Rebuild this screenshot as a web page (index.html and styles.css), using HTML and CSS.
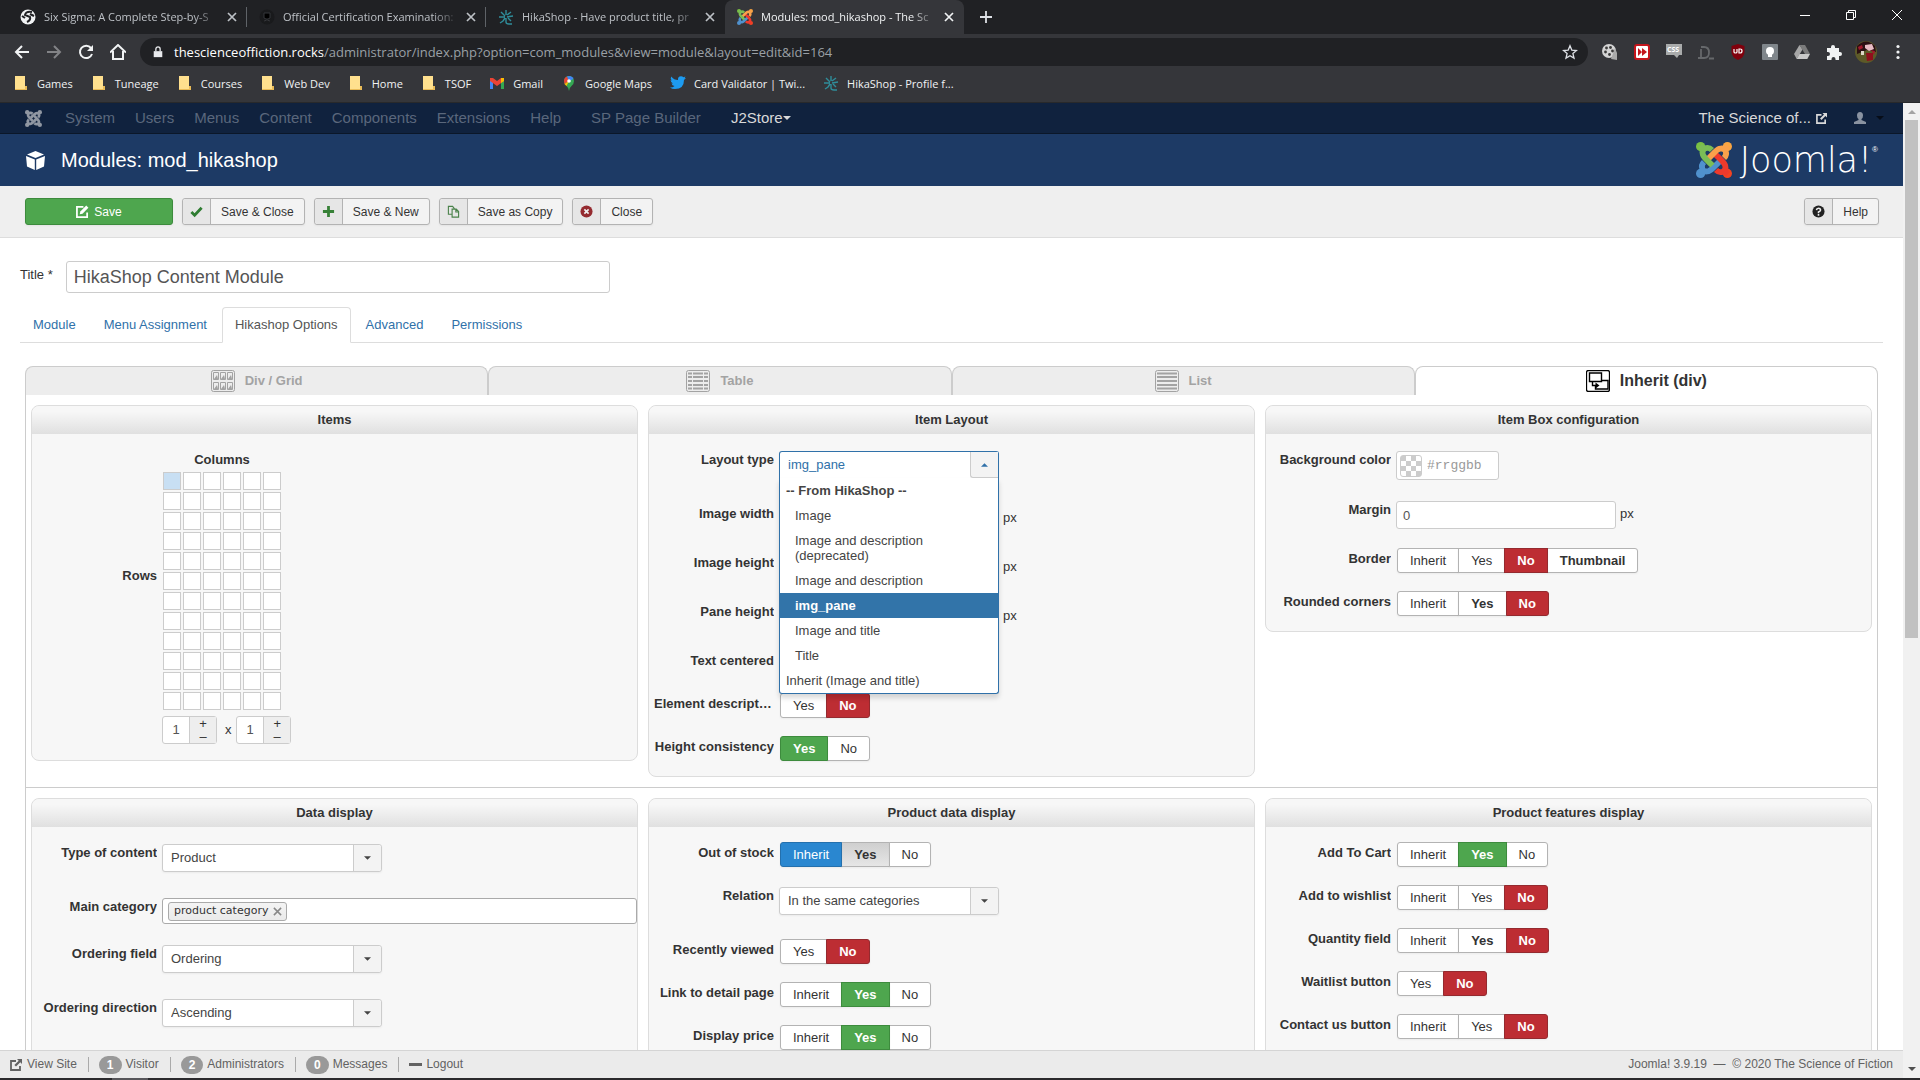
FILE: index.html
```html
<!DOCTYPE html>
<html lang="en">
    <head>
        <meta charset="UTF-8" />
        <meta name="viewport" content="width=device-width, initial-scale=1.0" />
        <title>Modules: mod_hikashop - The Science of Fiction</title>
        <link rel="stylesheet" href="styles.css">
    </head>
    <body>
        <svg class="sprite">
            <symbol id="close" viewBox="0 0 10 10"><path d="M1 1l8 8M9 1l-8 8" fill="none" stroke="currentColor" stroke-width="1.7"/></symbol>
            <symbol id="folder" viewBox="0 0 16 16"><path d="M2 1h10v10h2v4H2z" fill="#ffe08e"/><path d="M2 14h10v1H2zM12 11h2v4h-2z" fill="#e9bb57"/></symbol>
            <symbol id="hika" viewBox="0 0 16 16"><path d="M8 1v5M3 3l4 4M13 3L9 6M1 8h6M9 8l6-1M7 9l-2 3-3 2M8 9v4q0 2 3 2h3M10 9l3 3" fill="none" stroke="#2f8d9a" stroke-width="1.4"/></symbol>
            <symbol id="joomla-arm" viewBox="0 0 36 36"><circle cx="4.6" cy="4.6" r="4.6"/><path d="M4 4l5 4M16 8C12 4 5 6 6.800 12.500C8 16 11 18 16.500 23.500" fill="none" stroke="currentColor" stroke-width="5.800"/></symbol>
            <symbol id="joomla" viewBox="0 0 36 36">
                <g fill="#5091cd" color="#5091cd"><use href="#joomla-arm" width="36" height="36" transform="rotate(270 18 18)"/></g>
                <g fill="#f44321" color="#ee3a2c"><use href="#joomla-arm" width="36" height="36" transform="rotate(180 18 18)"/></g>
                <g fill="#f9a541" color="#f9a14b"><use href="#joomla-arm" width="36" height="36" transform="rotate(90 18 18)"/></g>
                <g fill="#7ac143" color="#7bbd56"><use href="#joomla-arm" width="36" height="36"/></g>
            </symbol>
            <symbol id="joomla-mono" viewBox="0 0 36 36">
                <g fill="currentColor"><use href="#joomla-arm" width="36" height="36"/><use href="#joomla-arm" width="36" height="36" transform="rotate(90 18 18)"/><use href="#joomla-arm" width="36" height="36" transform="rotate(180 18 18)"/><use href="#joomla-arm" width="36" height="36" transform="rotate(270 18 18)"/></g>
            </symbol>
            <symbol id="external" viewBox="0 0 12 12"><path d="M6 2H1v9h9V7" fill="none" stroke="currentColor" stroke-width="1.8"/><path d="M7 0h5v5l-1.700-1.700-4.300 4.300-1.600-1.600L8.700 1.700z" fill="currentColor"/></symbol>
            <symbol id="caret" viewBox="0 0 8 4"><path d="M0 0h8L4 4z" fill="currentColor"/></symbol>
            <symbol id="edit" viewBox="0 0 14 14"><path d="M8 2H1v11h11V8" fill="none" stroke="currentColor" stroke-width="1.900"/><path d="M4 10l.7-3L11 .6 13.400 3 7 9.300z" fill="currentColor"/></symbol>
        </svg>

        <div class="browser">
            <div class="tab-strip">
                <div class="tab">
                    <svg class="favicon" viewBox="0 0 16 16"><circle cx="8" cy="8" r="7.500" fill="#f1f3f4"/><path d="M12 3Q6 2 5 6l5 2q1 3-3 5M2 7l3 2M10 5l4 2" fill="none" stroke="#202124" stroke-width="2"/></svg>
                    <span class="tab-title">Six Sigma: A Complete Step-by-S</span>
                    <button class="tab-close" aria-label="Close tab"><svg><use href="#close"/></svg></button>
                </div>
                <div class="tab">
                    <svg class="favicon" viewBox="0 0 16 16"><circle cx="8" cy="8" r="7.500" fill="#191a1c"/><path d="M5 4h6v5l-2 1H7L5 9zM5 12l3-1 3 1" fill="#000" stroke="#35363a"/></svg>
                    <span class="tab-title">Official Certification Examination:</span>
                    <button class="tab-close" aria-label="Close tab"><svg><use href="#close"/></svg></button>
                </div>
                <div class="tab no-line">
                    <svg class="favicon"><use href="#hika"/></svg>
                    <span class="tab-title">HikaShop - Have product title, pr</span>
                    <button class="tab-close" aria-label="Close tab"><svg><use href="#close"/></svg></button>
                </div>
                <div class="tab active">
                    <svg class="favicon"><use href="#joomla"/></svg>
                    <span class="tab-title">Modules: mod_hikashop - The Sc</span>
                    <button class="tab-close" aria-label="Close tab"><svg><use href="#close"/></svg></button>
                </div>
                <button class="new-tab" aria-label="New tab"><svg viewBox="0 0 12 12"><path d="M6 0v12M0 6h12" stroke="#dee1e6" stroke-width="1.800"/></svg></button>
                <div class="window-controls">
                    <button aria-label="Minimize"><svg viewBox="0 0 10 10"><path d="M0 5.500h10" stroke="#fff"/></svg></button>
                    <button aria-label="Restore"><svg viewBox="0 0 10 10"><path d="M.5 2.500h7v7h-7zM2.500 2.500v-2h7v7h-2" fill="none" stroke="#fff"/></svg></button>
                    <button aria-label="Close"><svg viewBox="0 0 10 10"><path d="M0 0l10 10M10 0L0 10" stroke="#fff"/></svg></button>
                </div>
            </div>

            <div class="toolbar">
                <button aria-label="Back"><svg viewBox="0 0 16 16"><path d="M15 8H2M8 2L2 8l6 6" fill="none" stroke="#f1f3f4" stroke-width="2"/></svg></button>
                <button aria-label="Forward"><svg viewBox="0 0 16 16"><path d="M1 8h13M8 2l6 6-6 6" fill="none" stroke="#828386" stroke-width="2"/></svg></button>
                <button aria-label="Reload"><svg viewBox="0 0 16 16"><path d="M13 4A6.200 6.200 0 1 0 14 10" fill="none" stroke="#f1f3f4" stroke-width="2"/><path d="M15 1v6H9z" fill="#f1f3f4"/></svg></button>
                <button aria-label="Home"><svg viewBox="0 0 16 16"><path d="M0 8.500L8 1l8 7.500M3 7v8h10V7" fill="none" stroke="#f1f3f4" stroke-width="2"/></svg></button>
                <div class="omnibox">
                    <svg class="lock" viewBox="0 0 12 14"><path d="M1 6h10v7H1z" fill="#e8eaed"/><path d="M3.500 6V3.500a2.500 2.500 0 0 1 5 0V6" fill="none" stroke="#e8eaed" stroke-width="1.500"/></svg>
                    <span class="url"><b>thescienceoffiction.rocks</b>/administrator/index.php?option=com_modules&amp;view=module&amp;layout=edit&amp;id=164</span>
                    <svg class="star" viewBox="0 0 16 16"><path d="M8 1.800l1.800 4.300 4.700.4-3.600 3 1.100 4.600L8 11.700l-4 2.400 1.100-4.600-3.600-3 4.700-.4z" fill="none" stroke="#dee1e6" stroke-width="1.300"/></svg>
                </div>
                <button aria-label="Film extension"><svg viewBox="0 0 16 16"><circle cx="7" cy="7" r="7" fill="#d4d4d4"/><path d="M9 15l6 1V9l-2-5z" fill="#aaa"/><g fill="#3a3a3a"><circle cx="4.500" cy="4" r="1.400"/><circle cx="8.500" cy="3.500" r="1.400"/><circle cx="10.500" cy="7" r="1.400"/><circle cx="7.500" cy="10.500" r="1.400"/><circle cx="3.500" cy="8" r="1.400"/></g></svg></button>
                <button aria-label="Video extension"><svg viewBox="0 0 16 16"><rect x="1" y="1" width="14" height="14" rx="2" fill="#fff" stroke="#c4151c" stroke-width="2"/><path d="M4 4l4 4-4 4zM8 4l5 4-5 4z" fill="#c4151c"/></svg></button>
                <button aria-label="CSS extension"><svg viewBox="0 0 16 16"><path d="M0 0h16v11h-3l-2 3-3-3H0z" fill="#a9abab"/><text class="css-text" x="1" y="8">CSS</text></svg></button>
                <button aria-label="D extension"><svg viewBox="0 0 16 16"><path d="M3 3h3q5 0 5 5.500T6 14H0M3 5v9M11 14.500h5" fill="none" stroke="#66686b" stroke-width="1.800"/></svg></button>
                <button aria-label="uBlock"><svg viewBox="0 0 16 16"><path d="M8 0l6.500 2v6q0 5-6.500 8Q1.500 13 1.500 8V2z" fill="#80000c"/><path d="M4 5v3q0 1 1.500 1T7 8V5M9 5v4h1q2 0 2-2t-2-2z" fill="none" stroke="#fff" stroke-width="1.200"/></svg></button>
                <button aria-label="Lamp extension"><svg viewBox="0 0 16 16"><rect width="16" height="16" rx="1" fill="#80868b"/><circle cx="8" cy="7" r="4" fill="#fff"/><path d="M6 10h4v3H6z" fill="#fff"/></svg></button>
                <button aria-label="Drive"><svg viewBox="0 0 16 16"><path d="M5.500 1L0 10l2.700 5L8.500 5.500z" fill="#a6a6a6"/><path d="M5.500 1H11l5 9h-5z" fill="#7b7b7b"/><path d="M5.500 10H16l-2.700 5H2.700z" fill="#c9c9c9"/></svg></button>
                <button aria-label="Extensions"><svg viewBox="0 0 16 16"><path d="M1 4h4V3a2 2 0 0 1 4 0v1h4v4h1a2 2 0 0 1 0 4h-1v4H9.500v-1a2 2 0 0 0-4 0v1H1v-4h1a2 2 0 0 0 0-4H1z" fill="#f1f3f4"/></svg></button>
                <button aria-label="Profile"><svg class="avatar" viewBox="0 0 22 22"><circle cx="11" cy="11" r="11" fill="#5d5a28"/><path d="M2 5q9-9 18 0l1 6-9-2-10 4z" fill="#2b1013"/><path d="M10 4l7-1 2 5-5 2-4-3z" fill="#e8bcc4"/><path d="M3 6l4-2 1 3-4 2zM16 9l4 1-1 4z" fill="#a1182b"/><path d="M11 12h7v7l-6 1z" fill="#8f0f1c"/><path d="M6 10h3v4H6z" fill="#dfd8c8"/></svg></button>
                <button aria-label="Menu"><svg viewBox="0 0 16 16"><g fill="#f1f3f4"><circle cx="8" cy="2.500" r="1.600"/><circle cx="8" cy="8" r="1.600"/><circle cx="8" cy="13.500" r="1.600"/></g></svg></button>
            </div>

            <nav class="bookmarks">
                <a href="#"><svg><use href="#folder"/></svg>Games</a>
                <a href="#"><svg><use href="#folder"/></svg>Tuneage</a>
                <a href="#"><svg><use href="#folder"/></svg>Courses</a>
                <a href="#"><svg><use href="#folder"/></svg>Web Dev</a>
                <a href="#"><svg><use href="#folder"/></svg>Home</a>
                <a href="#"><svg><use href="#folder"/></svg>TSOF</a>
                <a href="#"><svg viewBox="0 0 16 16"><path d="M1 3h3v11H1z" fill="#4285f4"/><path d="M12 3h3v11h-3z" fill="#34a853"/><path d="M1 3h3l4 3 4-3h3v3l-7 5-7-5z" fill="#ea4335"/><path d="M12 3h3v3l-3 2z" fill="#fbbc04"/></svg>Gmail</a>
                <a href="#"><svg viewBox="0 0 16 16"><path d="M3 6a5 5 0 0 1 10 0q0 3-2.500 5T8 16q0-3-2.500-5T3 6z" fill="#34a853"/><path d="M3 6a5 5 0 0 1 3-4.600L8 6l-4.500 3z" fill="#ea4335"/><path d="M6 1.400A5 5 0 0 1 12.500 4L8 6z" fill="#4285f4"/><path d="M3.500 9L8 6l-2.500 5z" fill="#fbbc04"/><circle cx="8" cy="6" r="1.800" fill="#fff"/></svg>Google Maps</a>
                <a href="#"><svg viewBox="0 0 16 16"><path d="M16 3l-2 2q0 9-9 9-3 0-5-1.500 3 0 4.500-1.500Q2 10.500 1.500 8.500H3Q.6 7.500.6 5L2 5.500Q0 3.500 1.200 1.500 4 5 8 5 7.600 1.500 11 1.200q1.500 0 2.500 1l2-.7-1 1.700z" fill="#1d9bf0"/></svg>Card Validator | Twi...</a>
                <a href="#"><svg><use href="#hika"/></svg>HikaShop - Profile f...</a>
            </nav>
        </div>

        <div class="viewport">
            <div class="page">
                <nav class="navbar">
                    <a href="#" class="brand" aria-label="Control panel"><svg><use href="#joomla-mono"/></svg></a>
                    <a href="#">System</a>
                    <a href="#">Users</a>
                    <a href="#">Menus</a>
                    <a href="#">Content</a>
                    <a href="#">Components</a>
                    <a href="#">Extensions</a>
                    <a href="#">Help</a>
                    <a href="#" class="extra">SP Page Builder</a>
                    <a href="#" class="extra lit">J2Store<svg class="caret"><use href="#caret"/></svg></a>
                    <a href="#" class="site-link lit">The Science of... <svg class="ext"><use href="#external"/></svg></a>
                    <a href="#" class="user" aria-label="User menu">
                        <svg class="person" viewBox="0 0 12 12"><path d="M6 0q3 0 3 3.500Q9 6 7.500 7v1L12 10v2H0v-2l4.500-2V7Q3 6 3 3.500 3 0 6 0z" fill="currentColor"/></svg>
                        <svg class="caret dark"><use href="#caret"/></svg>
                    </a>
                </nav>

                <header class="header">
                    <svg class="cube" viewBox="0 0 19 19"><path d="M9.500 0L18 3.500 9.500 7 1 3.500zM0 5l8.800 3.500V19L1 15.500zM19 5l-8.800 3.500V19L18 15.500z" fill="#fff"/></svg>
                    <h1>Modules: mod_hikashop</h1>
                    <a href="#" class="logo"><svg><use href="#joomla"/></svg><span>Joomla!</span><sup>®</sup></a>
                </header>

                <div class="subhead">
                    <button class="tool save"><svg><use href="#edit"/></svg>Save</button>
                    <button class="tool"><span class="tool-icon"><svg viewBox="0 0 14 14"><path d="M1.500 7.500L5 11l7.500-8" fill="none" stroke="#2f7d32" stroke-width="3"/></svg></span><span class="tool-text">Save &amp; Close</span></button>
                    <button class="tool"><span class="tool-icon"><svg viewBox="0 0 14 14"><path d="M7 1v12M1 7h12" stroke="#378137" stroke-width="3"/></svg></span><span class="tool-text">Save &amp; New</span></button>
                    <button class="tool"><span class="tool-icon"><svg viewBox="0 0 14 14"><path d="M5 10H1.500V1.500H6L8 4M5.500 4.500H10L12.500 7v6h-7zM9.500 5v2.500H12" fill="none" stroke="#4a824a" stroke-width="1.200"/></svg></span><span class="tool-text">Save as Copy</span></button>
                    <button class="tool"><span class="tool-icon"><svg viewBox="0 0 14 14"><circle cx="7" cy="7" r="6.500" fill="#942a2f"/><path d="M4.700 4.700l4.600 4.600M9.300 4.700L4.700 9.300" stroke="#eee" stroke-width="1.800"/></svg></span><span class="tool-text">Close</span></button>
                    <button class="tool help"><span class="tool-icon"><svg viewBox="0 0 14 14"><circle cx="7" cy="7" r="6.500" fill="#222"/><path d="M4.800 5.500Q5 3.500 7 3.500t2.200 1.800Q9.200 6.500 7 7.500V8.500M7 9.500v2" fill="none" stroke="#eee" stroke-width="1.700"/></svg></span><span class="tool-text">Help</span></button>
                </div>

                <main class="content">
                    <div class="title-row">
                        <label for="title">Title *</label>
                        <input type="text" id="title" value="HikaShop Content Module">
                    </div>

                    <nav class="nav-tabs">
                        <a href="#">Module</a>
                        <a href="#">Menu Assignment</a>
                        <a href="#" class="active">Hikashop Options</a>
                        <a href="#">Advanced</a>
                        <a href="#">Permissions</a>
                    </nav>

                    <div class="layouts">
                        <button class="layout"><svg viewBox="0 0 24 22"><rect x=".5" y=".5" width="23" height="21" rx="2" fill="none" stroke="currentColor"/><g fill="none" stroke="currentColor"><path d="M2.500 2.500h5v7h-5zM9.500 2.500h5v7h-5zM16.500 2.500h5v7h-5zM2.500 12.500h5v7h-5zM9.500 12.500h5v7h-5zM16.500 12.500h5v7h-5z"/></g><path d="M3 9l3-4 1 4zM10 9l3-4 1 4zM17 9l3-4 1 4zM3 19l3-4 1 4zM10 19l3-4 1 4zM17 19l3-4 1 4z" fill="currentColor"/></svg>Div / Grid</button>
                        <button class="layout"><svg viewBox="0 0 24 22"><rect x=".5" y=".5" width="23" height="21" rx="2" fill="none" stroke="currentColor"/><path d="M2 3.500h20M2 7h20M2 11h20M2 15h20M2 18.500h20" stroke="currentColor" stroke-width="2"/><path d="M6.500 1v20M17.500 1v20" stroke="#ededed"/></svg>Table</button>
                        <button class="layout"><svg viewBox="0 0 24 22"><rect x=".5" y=".5" width="23" height="21" rx="2" fill="none" stroke="currentColor"/><path d="M2 3.500h20M2 7h20M2 11h20M2 15h20M2 18.500h20" stroke="currentColor" stroke-width="2"/></svg>List</button>
                        <button class="layout active"><svg viewBox="0 0 24 22"><rect x=".5" y=".5" width="23" height="21" rx="2" fill="none" stroke="#000" stroke-width="1.300"/><path d="M3.500 3h12v8.500h-12zM16 10.500h6v8.500H9.500v-3M6.500 12v3.500h4" fill="none" stroke="#000" stroke-width="1.400"/><path d="M9.500 12.500l4 3-4 3z" fill="#000"/></svg>Inherit (div)</button>
                    </div>

                    <div class="options">
                        <section class="panels">
                            <div class="panel">
                                <h2>Items</h2>
                                <div class="panel-body">
                                    <div class="picker">
                                        <span class="picker-rows">Rows</span>
                                        <span class="picker-columns">Columns</span>
                                        <div class="cells" id="cells"></div>
                                    </div>
                                    <div class="counters">
                                        <div class="counter">
                                            <input type="text" value="1" aria-label="Columns">
                                            <div class="steps"><button>+</button><button>–</button></div>
                                        </div>
                                        <span>x</span>
                                        <div class="counter">
                                            <input type="text" value="1" aria-label="Rows">
                                            <div class="steps"><button>+</button><button>–</button></div>
                                        </div>
                                    </div>
                                </div>
                            </div>

                            <div class="panel">
                                <h2>Item Layout</h2>
                                <div class="panel-body">
                                    <div class="row row-select">
                                        <label for="layout-type">Layout type</label>
                                        <div class="chosen open">
                                            <select id="layout-type"><option>img_pane</option></select>
                                            <span class="arrow"><svg><use href="#caret"/></svg></span>
                                            <ul class="menu">
                                                <li class="group">-- From HikaShop --</li>
                                                <li class="sub">Image</li>
                                                <li class="sub">Image and description (deprecated)</li>
                                                <li class="sub">Image and description</li>
                                                <li class="sub selected">img_pane</li>
                                                <li class="sub">Image and title</li>
                                                <li class="sub">Title</li>
                                                <li>Inherit (Image and title)</li>
                                            </ul>
                                        </div>
                                    </div>
                                    <div class="row row-input">
                                        <label for="image-width">Image width</label>
                                        <div class="field"><input type="text" id="image-width"> px</div>
                                    </div>
                                    <div class="row row-input">
                                        <label for="image-height">Image height</label>
                                        <div class="field"><input type="text" id="image-height"> px</div>
                                    </div>
                                    <div class="row row-input">
                                        <label for="pane-height">Pane height</label>
                                        <div class="field"><input type="text" id="pane-height"> px</div>
                                    </div>
                                    <div class="row">
                                        <label for="centered">Text centered</label>
                                        <input type="checkbox" class="check" id="centered">
                                    </div>
                                    <div class="row">
                                        <span class="label">Element description</span>
                                        <div class="btn-group">
                                            <label><input type="radio" name="desc">Yes</label>
                                            <label class="no"><input type="radio" name="desc" checked>No</label>
                                        </div>
                                    </div>
                                    <div class="row">
                                        <span class="label">Height consistency</span>
                                        <div class="btn-group">
                                            <label class="yes"><input type="radio" name="consistency" checked>Yes</label>
                                            <label><input type="radio" name="consistency">No</label>
                                        </div>
                                    </div>
                                </div>
                            </div>

                            <div class="panel">
                                <h2>Item Box configuration</h2>
                                <div class="panel-body">
                                    <div class="row row-color">
                                        <label for="bg-color">Background color</label>
                                        <div class="color-field"><span class="swatch"></span><input type="text" id="bg-color" placeholder="#rrggbb"></div>
                                    </div>
                                    <div class="row row-input">
                                        <label for="margin">Margin</label>
                                        <div class="field"><input type="text" id="margin" value="0"> px</div>
                                    </div>
                                    <div class="row">
                                        <span class="label">Border</span>
                                        <div class="btn-group">
                                            <label><input type="radio" name="border">Inherit</label>
                                            <label><input type="radio" name="border">Yes</label>
                                            <label class="no"><input type="radio" name="border" checked>No</label>
                                            <label class="strong"><input type="radio" name="border">Thumbnail</label>
                                        </div>
                                    </div>
                                    <div class="row">
                                        <span class="label">Rounded corners</span>
                                        <div class="btn-group">
                                            <label><input type="radio" name="corners">Inherit</label>
                                            <label class="strong"><input type="radio" name="corners">Yes</label>
                                            <label class="no"><input type="radio" name="corners" checked>No</label>
                                        </div>
                                    </div>
                                </div>
                            </div>
                        </section>

                        <section class="panels">
                            <div class="panel">
                                <h2>Data display</h2>
                                <div class="panel-body">
                                    <div class="row row-select">
                                        <label for="content-type">Type of content</label>
                                        <div class="chosen">
                                            <select id="content-type"><option>Product</option></select>
                                            <span class="arrow"><svg><use href="#caret"/></svg></span>
                                        </div>
                                    </div>
                                    <div class="row row-tags">
                                        <span class="label">Main category</span>
                                        <div class="tags"><span class="tag">product category<button aria-label="Remove"><svg><use href="#close"/></svg></button></span></div>
                                    </div>
                                    <div class="row row-select">
                                        <label for="order-field">Ordering field</label>
                                        <div class="chosen">
                                            <select id="order-field"><option>Ordering</option></select>
                                            <span class="arrow"><svg><use href="#caret"/></svg></span>
                                        </div>
                                    </div>
                                    <div class="row row-select">
                                        <label for="order-dir">Ordering direction</label>
                                        <div class="chosen">
                                            <select id="order-dir"><option>Ascending</option></select>
                                            <span class="arrow"><svg><use href="#caret"/></svg></span>
                                        </div>
                                    </div>
                                </div>
                            </div>

                            <div class="panel">
                                <h2>Product data display</h2>
                                <div class="panel-body">
                                    <div class="row">
                                        <span class="label">Out of stock</span>
                                        <div class="btn-group">
                                            <label class="inherit"><input type="radio" name="stock" checked>Inherit</label>
                                            <label class="strong pressed"><input type="radio" name="stock">Yes</label>
                                            <label><input type="radio" name="stock">No</label>
                                        </div>
                                    </div>
                                    <div class="row row-select">
                                        <label for="relation">Relation</label>
                                        <div class="chosen">
                                            <select id="relation"><option>In the same categories</option></select>
                                            <span class="arrow"><svg><use href="#caret"/></svg></span>
                                        </div>
                                    </div>
                                    <div class="row">
                                        <span class="label">Recently viewed</span>
                                        <div class="btn-group">
                                            <label><input type="radio" name="recent">Yes</label>
                                            <label class="no"><input type="radio" name="recent" checked>No</label>
                                        </div>
                                    </div>
                                    <div class="row">
                                        <span class="label">Link to detail page</span>
                                        <div class="btn-group">
                                            <label><input type="radio" name="link">Inherit</label>
                                            <label class="yes"><input type="radio" name="link" checked>Yes</label>
                                            <label><input type="radio" name="link">No</label>
                                        </div>
                                    </div>
                                    <div class="row">
                                        <span class="label">Display price</span>
                                        <div class="btn-group">
                                            <label><input type="radio" name="price">Inherit</label>
                                            <label class="yes"><input type="radio" name="price" checked>Yes</label>
                                            <label><input type="radio" name="price">No</label>
                                        </div>
                                    </div>
                                </div>
                            </div>

                            <div class="panel">
                                <h2>Product features display</h2>
                                <div class="panel-body">
                                    <div class="row">
                                        <span class="label">Add To Cart</span>
                                        <div class="btn-group">
                                            <label><input type="radio" name="cart">Inherit</label>
                                            <label class="yes"><input type="radio" name="cart" checked>Yes</label>
                                            <label><input type="radio" name="cart">No</label>
                                        </div>
                                    </div>
                                    <div class="row">
                                        <span class="label">Add to wishlist</span>
                                        <div class="btn-group">
                                            <label><input type="radio" name="wishlist">Inherit</label>
                                            <label><input type="radio" name="wishlist">Yes</label>
                                            <label class="no"><input type="radio" name="wishlist" checked>No</label>
                                        </div>
                                    </div>
                                    <div class="row">
                                        <span class="label">Quantity field</span>
                                        <div class="btn-group">
                                            <label><input type="radio" name="quantity">Inherit</label>
                                            <label class="strong"><input type="radio" name="quantity">Yes</label>
                                            <label class="no"><input type="radio" name="quantity" checked>No</label>
                                        </div>
                                    </div>
                                    <div class="row">
                                        <span class="label">Waitlist button</span>
                                        <div class="btn-group">
                                            <label><input type="radio" name="waitlist">Yes</label>
                                            <label class="no"><input type="radio" name="waitlist" checked>No</label>
                                        </div>
                                    </div>
                                    <div class="row">
                                        <span class="label">Contact us button</span>
                                        <div class="btn-group">
                                            <label><input type="radio" name="contact">Inherit</label>
                                            <label><input type="radio" name="contact">Yes</label>
                                            <label class="no"><input type="radio" name="contact" checked>No</label>
                                        </div>
                                    </div>
                                </div>
                            </div>
                        </section>
                    </div>
                </main>

                <footer class="status">
                    <a href="#"><svg><use href="#external"/></svg>View Site</a>
                    <span class="item"><span class="badge">1</span>Visitor</span>
                    <span class="item"><span class="badge">2</span>Administrators</span>
                    <a href="#" class="item"><span class="badge">0</span>Messages</a>
                    <a href="#" class="item"><span class="dash"></span>Logout</a>
                    <span class="copyright">Joomla! 3.9.19 &nbsp;—&nbsp; © 2020 The Science of Fiction</span>
                </footer>
            </div>

            <div class="scrollbar">
                <svg class="up"><use href="#caret"/></svg>
                <div class="track"><div class="thumb"></div></div>
                <svg class="down"><use href="#caret"/></svg>
            </div>
        </div>
        <div class="taskbar"><span></span></div>

        <script>
            // 12 rows of 6 cells, first one picked
            const cells = document.getElementById("cells");
            for (let i = 0; i < 72; i++) {
                const cell = document.createElement("button");
                cell.setAttribute("aria-label", "Cell " + (i + 1));
                if (i === 0) cell.className = "on";
                cells.appendChild(cell);
            }
        </script>
    </body>
</html>
```
FILE: styles.css
```css
* {
    box-sizing: border-box;
}
body {
    margin: 0;
    height: 100vh;
    display: flex;
    flex-direction: column;
    overflow: hidden;
    font-family: "Liberation Sans", Arial, sans-serif;
    font-size: 13px;
    line-height: 18px;
    color: #333;
    background-color: #fff;
}
button,
input,
select {
    font: inherit;
    color: inherit;
    margin: 0;
    padding: 0;
    border: 0;
    background: none;
}
a {
    color: inherit;
    text-decoration: none;
}
svg {
    display: block;
    flex: none;
}
.sprite {
    position: absolute;
    width: 0;
    height: 0;
}

/* browser window */
.browser {
    font-family: "Open Sans", "Noto Sans", sans-serif;
    font-size: 11px;
    color: #f1f3f4;
    background-color: #35363a;
    border-bottom: 1px solid #28292b;
}
.tab-strip {
    display: flex;
    height: 34px;
    padding-left: 8px;
    background-color: #202124;
}
.tab {
    display: flex;
    align-items: center;
    width: 239px;
    padding: 0 6px 0 12px;
    color: #bdc1c6;
    background: linear-gradient(#5f6368, #5f6368) right center / 1px 20px no-repeat;
}
.tab.no-line {
    background: none;
}
.tab.active {
    color: #f1f3f4;
    background: #35363a;
    border-radius: 8px 8px 0 0;
}
.favicon {
    width: 16px;
    height: 16px;
}
.tab-title {
    flex: 1;
    min-width: 0;
    margin: 0 3px 0 8px;
    overflow: hidden;
    white-space: nowrap;
    mask-image: linear-gradient(to right, #000 85%, transparent);
}
.tab-close {
    padding: 4px;
}
.tab-close svg {
    width: 10px;
    height: 10px;
}
.new-tab {
    padding: 0 16px;
}
.new-tab svg {
    width: 12px;
    height: 12px;
}
.window-controls {
    display: flex;
    height: 29px;
    margin-left: auto;
}
.window-controls button {
    width: 46px;
    display: flex;
    align-items: center;
    justify-content: center;
}
.window-controls svg {
    width: 10px;
    height: 10px;
}
.toolbar {
    display: flex;
    align-items: center;
    padding: 4px 6px 0;
}
.toolbar button {
    width: 32px;
    display: flex;
    justify-content: center;
}
.toolbar svg {
    width: 16px;
    height: 16px;
}
.toolbar .avatar {
    width: 22px;
    height: 22px;
}
.css-text {
    font-size: 7px;
    font-weight: bold;
    fill: #fff;
}
.omnibox {
    flex: 1;
    display: flex;
    align-items: center;
    height: 28px;
    margin: 0 6px;
    padding: 0 10px 0 12px;
    border-radius: 14px;
    background-color: #202124;
}
.toolbar .lock {
    width: 12px;
    height: 12px;
}
.url {
    flex: 1;
    margin-left: 10px;
    font-size: 13px;
    color: #9aa0a6;
}
.url b {
    font-weight: normal;
    color: #fff;
}
.bookmarks {
    display: flex;
    gap: 18px;
    align-items: center;
    height: 36px;
    padding-left: 13px;
}
.bookmarks a {
    display: flex;
    gap: 8px;
}
.bookmarks svg {
    width: 16px;
    height: 16px;
}

/* page and its scrollbar */
.viewport {
    flex: 1;
    min-height: 0;
    display: flex;
}
.page {
    flex: 1;
    min-width: 0;
    display: flex;
    flex-direction: column;
}
.scrollbar {
    width: 17px;
    display: flex;
    flex-direction: column;
    align-items: center;
    padding: 7px 0;
    color: #505050;
    background-color: #f1f1f1;
}
.scrollbar svg {
    width: 8px;
    height: 4px;
}
.scrollbar .up {
    color: #a3a3a3;
    transform: rotate(180deg);
}
.track {
    flex: 1;
    margin: 6px 0;
}
.thumb {
    width: 13px;
    height: 55%;
    background-color: #c1c1c1;
}
.taskbar {
    height: 2px;
    padding-left: 112px;
    background-color: #2b2a2d;
}
.taskbar span {
    display: block;
    width: 36px;
    height: 2px;
    background-color: #57565a;
}

/* admin header */
.navbar {
    flex: none;
    display: flex;
    align-items: center;
    height: 31px;
    padding: 0 9px 0 15px;
    font-size: 15px;
    color: #5a677c;
    background-color: #10223e;
    border-bottom: 1px solid #0b1729;
}
.navbar a {
    display: flex;
    align-items: center;
    padding: 0 10px;
}
.brand {
    margin-right: 3px;
    color: #9097a2;
}
.brand svg {
    width: 17px;
    height: 17px;
}
.navbar .extra {
    margin-left: 10px;
}
.navbar .lit {
    color: #d9d9d9;
}
.caret {
    width: 8px;
    height: 4px;
}
.caret.dark {
    color: #070d18;
}
.navbar .site-link {
    gap: 5px;
    margin-left: auto;
}
.ext {
    width: 11px;
    height: 11px;
}
.navbar .user {
    gap: 10px;
    margin-left: 7px;
    color: #8a93a1;
}
.person {
    width: 12px;
    height: 12px;
}
.header {
    flex: none;
    display: flex;
    align-items: center;
    height: 52px;
    padding: 0 25px 0 26px;
    background-color: #1d3a65;
    color: #fff;
}
.cube {
    width: 19px;
    height: 19px;
}
.header h1 {
    margin: 0 0 0 16px;
    font-size: 20px;
    font-weight: normal;
    line-height: 28px;
}
.logo {
    display: flex;
    align-items: center;
    margin-left: auto;
}
.logo svg {
    width: 36px;
    height: 36px;
    margin-right: 8px;
}
.logo span {
    font-family: "DejaVu Sans", sans-serif;
    font-size: 35px;
    font-weight: 200;
    line-height: 36px;
}
.logo sup {
    align-self: flex-start;
    font-size: 8px;
    line-height: 16px;
}

/* toolbar buttons */
.subhead {
    flex: none;
    display: flex;
    gap: 9px;
    padding: 12px 24px 12px 25px;
    background-color: #efefef;
    border-bottom: 1px solid #ddd;
}
.tool {
    display: flex;
    height: 27px;
    font-size: 12px;
    line-height: 26px;
    background-color: #f3f3f3;
    border: 1px solid #b3b3b3;
    border-radius: 3px;
    box-shadow: 0 1px 2px rgba(0, 0, 0, 0.05);
}
.tool svg {
    width: 13px;
    height: 13px;
}
.tool-icon {
    display: flex;
    align-items: center;
    justify-content: center;
    width: 28px;
    height: 25px;
    background-color: #e6e6e6;
    border-right: 1px solid #b3b3b3;
    border-radius: 3px 0 0 3px;
}
.tool-text {
    padding: 0 10px;
}
.tool.save {
    width: 148px;
    gap: 5px;
    align-items: center;
    justify-content: center;
    color: #fff;
    background-color: #4ea64e;
    border-color: #3d8b3d;
}
.tool.help {
    margin-left: auto;
}

/* form */
.content {
    flex: 1;
    min-height: 0;
    overflow: hidden;
    padding: 23px 20px 0;
}
.title-row {
    display: flex;
    gap: 13px;
    line-height: 28px;
}
.title-row input {
    width: 544px;
    height: 32px;
    padding: 0 7px;
    font-size: 18px;
    color: #555;
    border: 1px solid #ccc;
    border-radius: 3px;
}
.nav-tabs {
    display: flex;
    gap: 2px;
    margin: 14px 0 23px;
    border-bottom: 1px solid #ddd;
}
.nav-tabs a {
    padding: 8px 12px;
    margin-bottom: -1px;
    border: 1px solid transparent;
    border-radius: 4px 4px 0 0;
    color: #3071a9;
}
.nav-tabs .active {
    color: #555;
    background-color: #fff;
    border-color: #ddd #ddd #fff;
}
.layouts {
    display: grid;
    grid-template-columns: repeat(4, 1fr);
    margin: 0 5px;
}
.layout {
    display: flex;
    align-items: center;
    justify-content: center;
    gap: 10px;
    height: 29px;
    font-weight: bold;
    color: #a3a3a3;
    background-color: #ededed;
    border: 1px solid #ccc;
    border-bottom: 0;
    border-radius: 8px 8px 0 0;
}
.layout svg {
    width: 24px;
    height: 22px;
}
.layout.active {
    font-size: 16px;
    color: #333;
    background-color: #fff;
}
.options {
    margin: 0 5px;
    border: 1px solid #ccc;
    border-top: 0;
}
.panels {
    display: grid;
    grid-template-columns: repeat(3, 1fr);
    align-items: start;
    gap: 10px;
    padding: 10px 5px;
}
.panels + .panels {
    align-items: stretch;
    border-top: 1px solid #ccc;
}
.panel {
    min-width: 0;
    background-color: #f7f7f7;
    border: 1px solid #ddd;
    border-radius: 8px;
}
.panel h2 {
    margin: 0;
    padding: 5px 0;
    font-size: 13px;
    line-height: 18px;
    text-align: center;
    background: linear-gradient(#f7f7f7 20%, #e0e0e0);
    border-radius: 8px 8px 0 0;
}
.panel-body {
    display: flex;
    flex-direction: column;
    gap: 18px;
    padding: 15px 0;
}
.row {
    display: grid;
    grid-template-columns: 125px 1fr;
    gap: 5px;
    align-items: start;
    min-height: 25px;
}
.row > label,
.row > .label {
    margin-top: 2px;
    padding-left: 5px;
    font-weight: bold;
    text-align: right;
    overflow: hidden;
    text-overflow: ellipsis;
    white-space: nowrap;
}
.row-select {
    min-height: 36px;
}
.row-input {
    min-height: 31px;
}
.row-color {
    min-height: 32px;
}
.row-tags {
    min-height: 29px;
}
.field,
.chosen,
.color-field,
.tags {
    margin-top: 2px;
}
.field {
    display: flex;
    gap: 4px;
    line-height: 26px;
}
.field input {
    width: 220px;
    height: 28px;
    padding: 0 6px;
    color: #555;
    background-color: #fff;
    border: 1px solid #ccc;
    border-radius: 3px;
}
.check {
    justify-self: start;
    margin: 6px 1px;
}
.btn-group {
    display: flex;
    margin-left: 1px;
}
.btn-group label {
    padding: 3px 12px;
    line-height: 17px;
    background-color: #fff;
    border: 1px solid #b3b3b3;
    box-shadow: 0 1px 2px rgba(0, 0, 0, 0.05);
}
.btn-group label + label {
    margin-left: -1px;
}
.btn-group label:first-child {
    border-radius: 3px 0 0 3px;
}
.btn-group label:last-child {
    border-radius: 0 3px 3px 0;
}
.btn-group input {
    display: block;
    width: 0;
    height: 0;
    appearance: none;
}
.btn-group .strong,
.btn-group .yes,
.btn-group .no {
    font-weight: bold;
}
.btn-group .yes,
.btn-group .no,
.btn-group .inherit {
    color: #fff;
    z-index: 1;
}
.btn-group .yes {
    background-color: #4ea64e;
    border-color: #3d8b3d;
}
.btn-group .no {
    background-color: #bd2d33;
    border-color: #942a2f;
}
.btn-group .inherit {
    background-color: #2a87d0;
    border-color: #2470ad;
}
.btn-group .pressed {
    background: linear-gradient(#cfcfcf, #e6e6e6);
}
.chosen {
    position: relative;
    display: flex;
    width: 220px;
    height: 28px;
    background-color: #fff;
    border: 1px solid #ccc;
    border-radius: 3px;
    box-shadow: 0 1px 2px rgba(0, 0, 0, 0.05);
    color: #444;
}
.chosen select {
    flex: 1;
    padding-left: 8px;
    appearance: none;
}
.arrow {
    display: flex;
    align-items: center;
    justify-content: center;
    width: 28px;
    background-color: #f3f3f3;
    border-left: 1px solid #ccc;
    border-radius: 0 3px 3px 0;
}
.arrow svg {
    width: 7px;
    height: 4px;
}
.chosen.open {
    color: #3071a9;
    border-color: #3071a9;
    border-bottom-color: #fff;
    border-radius: 3px 3px 0 0;
}
.open .arrow {
    border-bottom: 1px solid #ccc;
    border-radius: 0 0 0 3px;
}
.open .arrow svg {
    transform: rotate(180deg);
}
.menu {
    position: absolute;
    z-index: 5;
    top: 26px;
    left: -1px;
    right: -1px;
    margin: 0;
    padding: 0;
    list-style: none;
    line-height: 15px;
    color: #444;
    background-color: #fff;
    border: 1px solid #3071a9;
    border-top: 0;
    border-radius: 0 0 3px 3px;
    box-shadow: 0 4px 5px rgba(0, 0, 0, 0.15);
}
.menu li {
    padding: 5px 6px;
}
.menu .sub {
    padding: 5px 15px;
}
.menu .group {
    font-weight: bold;
}
.menu .selected {
    font-weight: bold;
    color: #fff;
    background-color: #3274a9;
}
.color-field {
    display: flex;
    align-items: center;
    gap: 5px;
    width: 103px;
    height: 29px;
    padding: 0 3px;
    background-color: #fff;
    border: 1px solid #ccc;
    border-radius: 3px;
}
.swatch {
    width: 22px;
    height: 22px;
    border: 1px solid #ccc;
    border-radius: 3px;
    background: conic-gradient(#fff 25%, #ccc 0 50%, #fff 0 75%, #ccc 0) 0 0 / 10px 10px;
}
.color-field input {
    width: 66px;
    font-family: "Liberation Mono", monospace;
}
.color-field input::placeholder {
    color: #999;
}
.tags {
    display: flex;
    align-items: center;
    height: 26px;
    padding: 0 5px;
    background-color: #fff;
    border: 1px solid #aaa;
    border-radius: 3px;
}
.tag {
    display: flex;
    align-items: center;
    gap: 5px;
    height: 19px;
    padding: 0 4px 0 5px;
    font-family: "DejaVu Sans", sans-serif;
    font-size: 11px;
    background: linear-gradient(#f4f4f4, #eaeaea);
    border: 1px solid #aaa;
    border-radius: 3px;
}
.tag button {
    color: #888;
}
.tag svg {
    width: 9px;
    height: 9px;
}

/* columns and rows picker */
.picker {
    display: grid;
    grid-template-columns: 125px max-content;
    column-gap: 6px;
    margin-bottom: -12px;
    font-weight: bold;
}
.picker-rows {
    grid-row: 1 / 3;
    align-self: center;
    padding-bottom: 8px;
    text-align: right;
}
.picker-columns {
    padding: 2px 0 3px;
    text-align: center;
}
.cells {
    display: grid;
    grid-template-columns: repeat(6, 18px);
    grid-auto-rows: 18px;
    gap: 2px;
}
.cells button {
    background-color: #fff;
    border: 1px solid #ccc;
}
.cells .on {
    background-color: #c8dff3;
}
.counters {
    display: flex;
    align-items: center;
    gap: 8px;
    padding: 0 0 1px 130px;
}
.counters span {
    width: 1ch;
    margin-right: -4px;
}
.counter {
    display: flex;
    width: 55px;
    height: 28px;
    border: 1px solid #ccc;
    border-radius: 3px;
    background-color: #fff;
}
.counter input {
    flex: 1;
    min-width: 0;
    text-align: center;
    color: #555;
}
.steps {
    display: grid;
    width: 27px;
    line-height: 13px;
    background-color: #eee;
    border-left: 1px solid #ccc;
}

/* status bar */
.status {
    flex: none;
    display: flex;
    align-items: center;
    gap: 11px;
    height: 28px;
    padding: 0 10px;
    font-size: 12px;
    line-height: 15px;
    color: #626262;
    background-color: #ebebeb;
    border-top: 1px solid #d4d4d4;
}
.status a,
.item {
    display: flex;
    align-items: center;
    gap: 5px;
}
.status svg {
    width: 12px;
    height: 12px;
}
.item,
.status .item {
    gap: 4px;
    padding-left: 10px;
    border-left: 1px solid #aaa;
}
.badge {
    margin: -2px 0;
    padding: 2px 8px;
    font-weight: bold;
    color: #fff;
    line-height: 14px;
    background-color: #999;
    border-radius: 9px;
}
.dash {
    width: 13px;
    height: 3px;
    background-color: #626262;
}
.copyright {
    margin-left: auto;
}
```
